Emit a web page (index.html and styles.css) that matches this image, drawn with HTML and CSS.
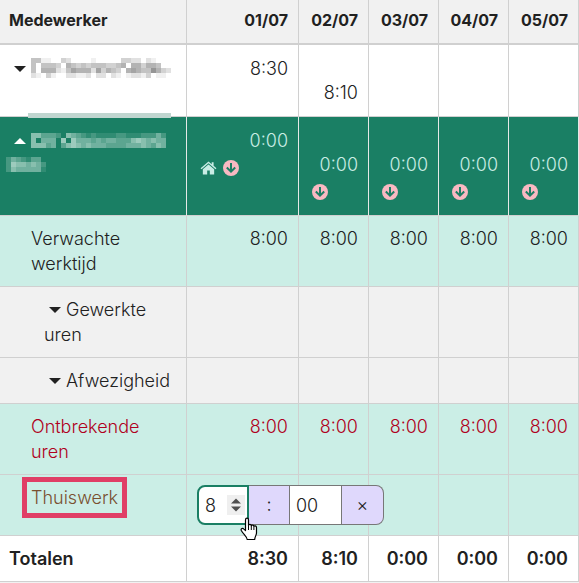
FILE: index.html
```html
<!DOCTYPE html>
<html lang="nl">

<head>
    <meta charset="UTF-8">
    <meta name="viewport" content="width=device-width, initial-scale=1.0">
    <title>Urenoverzicht</title>
    <link rel="stylesheet" href="styles.css">
</head>

<body>
    <svg class="symbols" aria-hidden="true">
        <symbol id="icon-down" viewBox="0 0 16 16">
            <circle cx="8" cy="8" r="8" fill="#f8b9c2"/>
            <path d="M8 3v9M3.8 7.500L8 11.700l4.200-4.200" fill="none" stroke="#1a7f64" stroke-width="2"/>
        </symbol>
        <symbol id="icon-home" viewBox="0 0 18 16">
            <path d="M9 1L0.6 8.2l1 1.1L9 3l7.4 6.3 1-1.1-3-2.6V2h-2v1.9z" fill="#c9ede5"/>
            <path d="M9 4.2L3 9.3V15h4.6v-4.4h2.8V15H15V9.3z" fill="#c9ede5"/>
        </symbol>
    </svg>

    <table class="hours">
        <colgroup>
            <col class="col-name">
            <col class="col-first">
            <col class="col-day">
            <col class="col-day">
            <col class="col-day">
            <col class="col-day">
            <col>
        </colgroup>
        <thead>
            <tr>
                <th scope="col" class="name">Medewerker</th>
                <th scope="col">01/07</th>
                <th scope="col">02/07</th>
                <th scope="col">03/07</th>
                <th scope="col">04/07</th>
                <th scope="col">05/07</th>
                <td></td>
            </tr>
        </thead>
        <tbody>
            <tr class="employee">
                <th scope="row" class="name"><span class="caret"></span><svg class="mask" id="mask-closed"></svg></th>
                <td>8:30</td>
                <td class="lower">8:10</td>
                <td></td>
                <td></td>
                <td></td>
                <td></td>
            </tr>
            <tr class="employee open">
                <th scope="row" class="name"><span class="caret up"></span><svg class="mask" id="mask-open"></svg></th>
                <td>0:00<div class="icons"><svg class="home"><use href="#icon-home"/></svg><svg><use href="#icon-down"/></svg></div></td>
                <td class="lower">0:00<div class="icons"><svg><use href="#icon-down"/></svg></div></td>
                <td class="lower">0:00<div class="icons"><svg><use href="#icon-down"/></svg></div></td>
                <td class="lower">0:00<div class="icons"><svg><use href="#icon-down"/></svg></div></td>
                <td class="lower">0:00<div class="icons"><svg><use href="#icon-down"/></svg></div></td>
                <td></td>
            </tr>
            <tr class="mint">
                <th scope="row" class="name sub">Verwachte werktijd</th>
                <td>8:00</td>
                <td>8:00</td>
                <td>8:00</td>
                <td>8:00</td>
                <td>8:00</td>
                <td></td>
            </tr>
            <tr class="grey">
                <th scope="row" class="name group"><span class="caret"></span>Gewerkte uren</th>
                <td></td>
                <td></td>
                <td></td>
                <td></td>
                <td></td>
                <td></td>
            </tr>
            <tr class="grey">
                <th scope="row" class="name group"><span class="caret"></span>Afwezigheid</th>
                <td></td>
                <td></td>
                <td></td>
                <td></td>
                <td></td>
                <td></td>
            </tr>
            <tr class="mint missing">
                <th scope="row" class="name sub">Ontbrekende uren</th>
                <td>8:00</td>
                <td>8:00</td>
                <td>8:00</td>
                <td>8:00</td>
                <td>8:00</td>
                <td></td>
            </tr>
            <tr class="mint homework">
                <th scope="row" class="name sub"><span class="marked">Thuiswerk</span></th>
                <td class="edit">
                    <div class="time-editor">
                        <div class="hour">
                            <input type="text" value="8" aria-label="Uren">
                            <svg class="spin" viewBox="0 0 18 20">
                                <path d="M0 0h18v20H0z" fill="#efefef"/>
                                <path d="M4 8.5L9 3.5l5 5zM4 11.5h10l-5 5z" fill="#505050"/>
                            </svg>
                        </div>
                        <span class="colon">:</span>
                        <input type="text" class="minute" value="00" aria-label="Minuten">
                        <button type="button" aria-label="Wissen">×</button>
                        <svg class="pointer" viewBox="0 0 18 24">
                            <path d="M5.5 13.5V3c0-2.4 3-2.4 3 0v5.5c.3-1.6 2.6-1.4 2.8.3.4-1.2 2.4-1 2.6.6.5-1 2.6-.7 2.6 1.2V16c0 2-1.6 3.4-1.8 6.5H7.2C6.8 19.5 3.2 17 1.3 13.5c-.8-1.9 1.300-2.900 2.600-1.400z" fill="#fff" stroke="#000" stroke-width="1.2" stroke-linejoin="round"/>
                            <path d="M8.500 8.500V13M11.300 9v4M13.900 10v3" fill="none" stroke="#000"/>
                        </svg>
                    </div>
                </td>
                <td></td>
                <td></td>
                <td></td>
                <td></td>
                <td></td>
            </tr>
        </tbody>
        <tfoot>
            <tr>
                <th scope="row" class="name">Totalen</th>
                <td>8:30</td>
                <td>8:10</td>
                <td>0:00</td>
                <td>0:00</td>
                <td>0:00</td>
                <td></td>
            </tr>
        </tfoot>
    </table>

    <script src="mask.js"></script>
</body>

</html>
```
FILE: styles.css
```css
body {
    margin: 0;
    background: #f1f1f1;
    color: #212121;
    font-family: Inter, sans-serif;
    font-size: 18px;
    font-weight: 300;
    line-height: 25px;
    overflow: hidden;
}

.symbols {
    display: none;
}

.hours {
    width: 100%;
    table-layout: fixed;
    border-collapse: separate;
    border-spacing: 0;
    background: #fff;
}

.col-name {
    width: 187px;
}

.col-first {
    width: 112px;
}

.col-day {
    width: 70px;
}

th,
td {
    box-sizing: border-box;
    padding: 10px;
    border-right: 1px solid #d0d0d0;
    border-bottom: 1px solid #d0d0d0;
    font-weight: inherit;
    text-align: right;
    vertical-align: top;
}

th:last-child,
td:last-child {
    padding: 0;
    border-right: 0;
}

.name {
    padding-left: 9px;
    text-align: left;
}

thead th,
thead td {
    height: 45px;
    padding-top: 8px;
    border-bottom-width: 2px;
    background: #f1f1f1;
    font-size: 16px;
    font-weight: 700;
}

.caret {
    display: inline-block;
    margin: 0 5px 3px;
    border: 6px solid transparent;
    border-top-color: #212121;
    border-bottom: 0;
}

.caret.up {
    border-top: 0;
    border-bottom: 6px solid #fff;
}

/* anonymised names */
.mask {
    position: absolute;
    top: 0;
    left: 0;
    overflow: visible;
    width: 1px;
    height: 1px;
}

#mask-closed {
    fill: #777;
}

#mask-open {
    fill: #e0f2ea;
}

.employee .name {
    position: relative;
}

.employee th,
.employee td {
    height: 72px;
    padding-top: 11px;
}

.employee .lower {
    padding-top: 35px;
}

.employee.open th,
.employee.open td {
    height: 99px;
    border-right-color: #e4e9e7;
    background: #1a7f64;
    color: #c9ede5;
}

.icons {
    display: flex;
    gap: 6px;
    padding: 7px 3px 0;
}

.icons svg {
    width: 16px;
    height: 16px;
}

.icons .home {
    width: 17px;
}

.mint {
    background: #cbeee6;
}

.grey {
    background: #f1f1f1;
}

.sub {
    padding-left: 31px;
}

.group {
    padding-left: 44px;
}

.missing {
    color: #b00020;
}

.homework {
    height: 61px;
    color: #795030;
}

.marked {
    padding: 1px 0;
    outline: 5px solid #e03e66;
    outline-offset: 4px;
}

.edit {
    overflow: visible;
}

.time-editor {
    position: relative;
    display: flex;
    width: 187px;
    height: 40px;
    color: #212121;
}

.time-editor input {
    box-sizing: border-box;
    width: 52px;
    height: 40px;
    padding: 0 6px;
    border: 1px solid #777;
    background: #fff;
    color: inherit;
    font: inherit;
    outline: 0;
}

.time-editor .minute {
    width: 53px;
}

.hour {
    position: relative;
}

.hour input {
    border: 2px solid #1a7f64;
    border-radius: 8px 0 0 8px;
}

.spin {
    position: absolute;
    top: 10px;
    right: 4px;
    width: 18px;
    height: 20px;
}

.colon,
.time-editor button {
    box-sizing: border-box;
    width: 42px;
    height: 40px;
    padding: 0;
    border: 1px solid #777;
    background: #dfd8fc;
    color: inherit;
    font: inherit;
    line-height: 38px;
    text-align: center;
}

.colon {
    width: 40px;
    border-width: 1px 0;
}

.time-editor button {
    border-left: 0;
    border-radius: 0 8px 8px 0;
}

.pointer {
    position: absolute;
    top: 32px;
    left: 43px;
    width: 18px;
    height: 24px;
}

tfoot {
    font-weight: 600;
}
```
FILE: mask.js
```js
const CELL = 5;

// one digit per cell, 0 = empty, 9 = strongest
const closedName = [
    '4411003200001000003322021000',
    '4044430543434443345055355400',
    '4055521465552635430565447532',
    '2103100221120220210122130110'
];

const openName = [
    '553332054321211112211122242',
    '504440606444343443335654544',
    '555340356545444333344454354'
];

const openNameEnd = [
    '24321330',
    '26554542',
    '25444441'
];

function addRect(svg, x, y, width, height) {
    const rect = document.createElementNS('http://www.w3.org/2000/svg', 'rect');
    rect.setAttribute('x', x);
    rect.setAttribute('y', y);
    rect.setAttribute('width', width);
    rect.setAttribute('height', height);
    svg.appendChild(rect);
    return rect;
}

function drawMask(svg, rows, left, top) {
    rows.forEach((row, r) => {
        [...row].forEach((level, c) => {
            const rect = addRect(svg, left + c * CELL, top + r * CELL, CELL, CELL);
            rect.setAttribute('fill-opacity', level / 9);
        });
    });
}

const closedMask = document.getElementById('mask-closed');
const openMask = document.getElementById('mask-open');

drawMask(closedMask, closedName, 31, 13);
drawMask(openMask, openName, 31, 16);
drawMask(openMask, openNameEnd, 6, 40);

addRect(openMask, 28, -4, 143, 5).setAttribute('fill', '#c0d6d0');
```
